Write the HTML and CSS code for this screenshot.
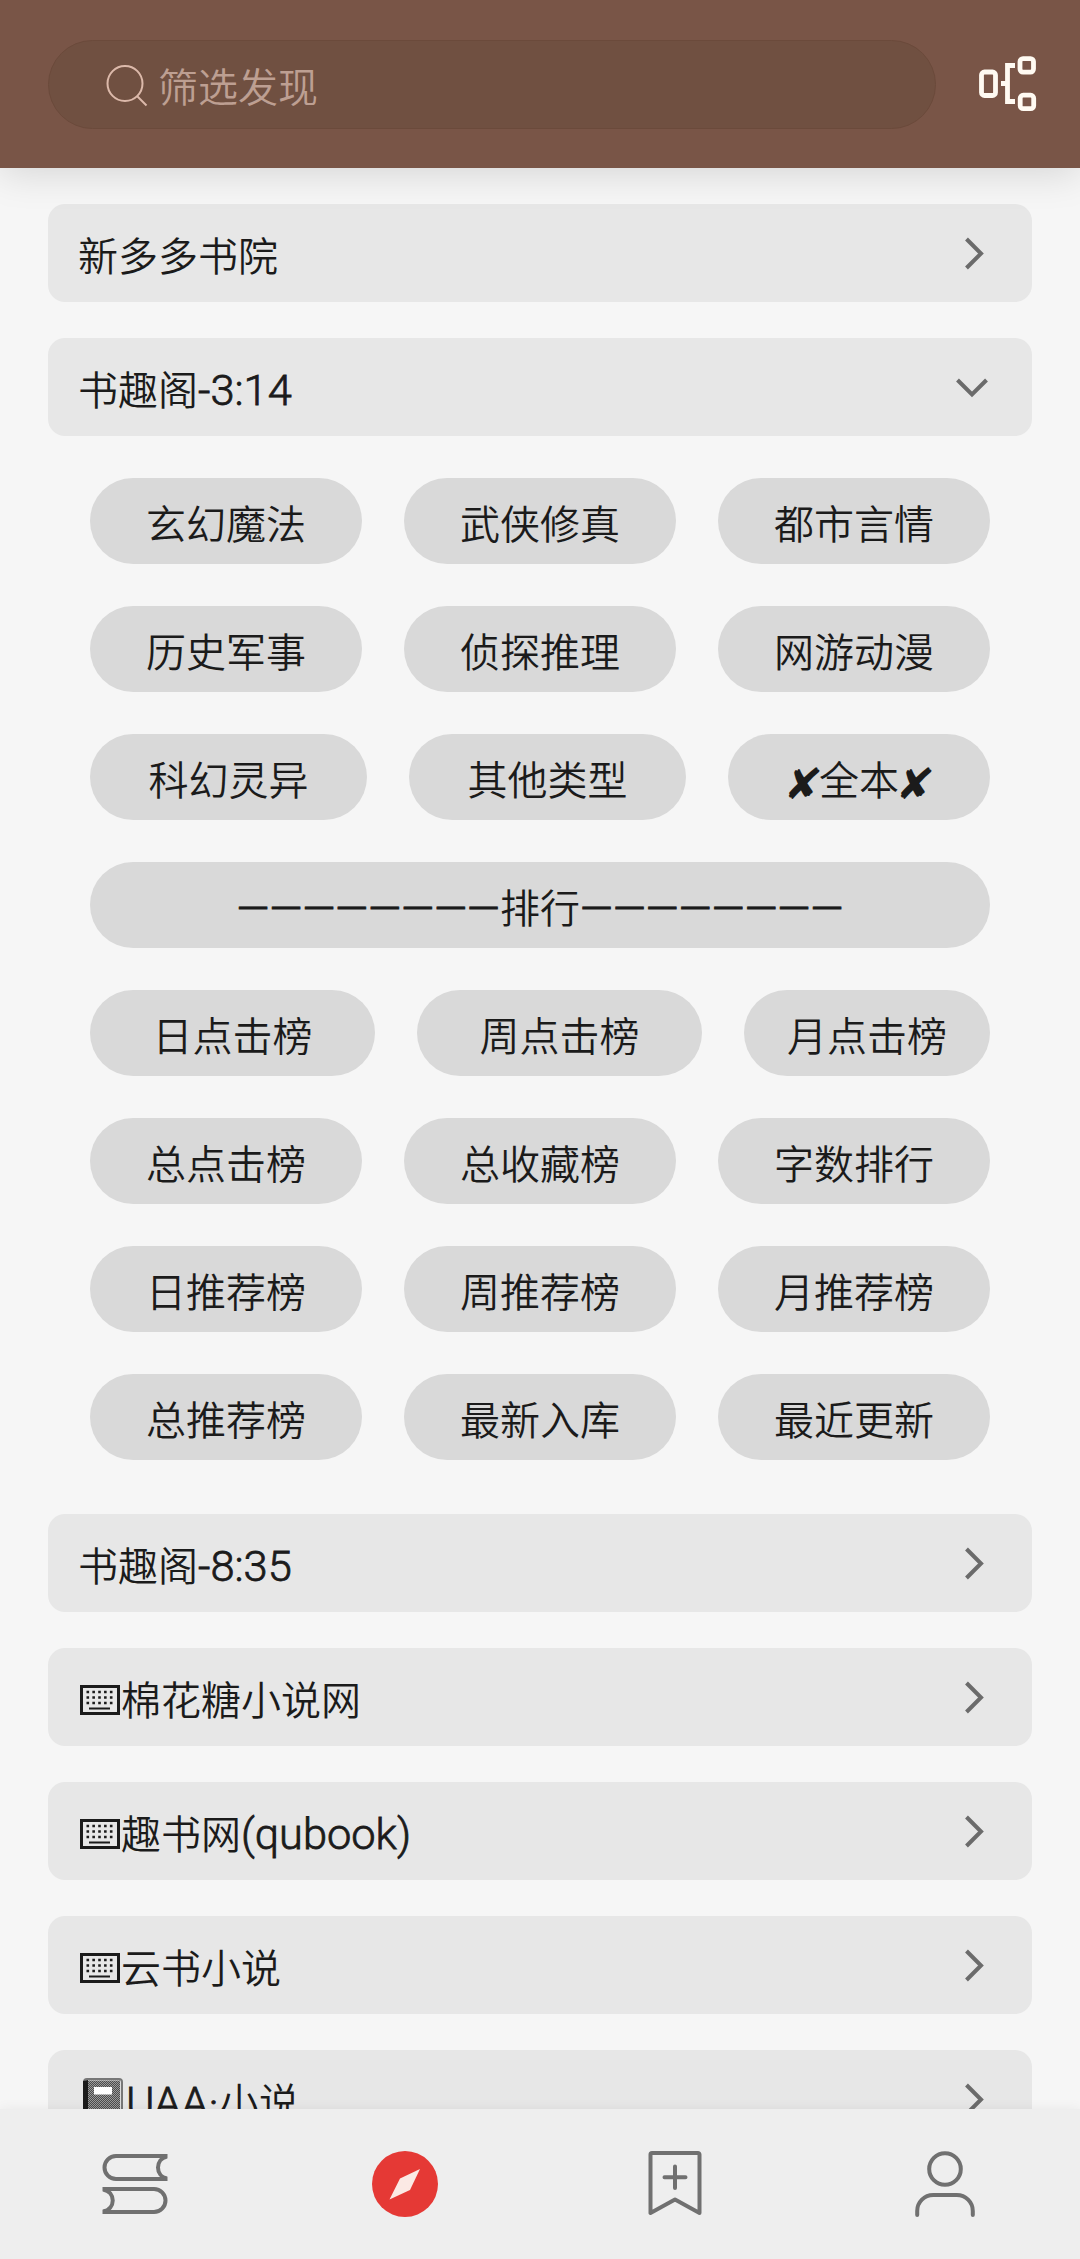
FILE: index.html
```html
<!DOCTYPE html>
<html lang="zh-CN">

<head>
  <meta charset="UTF-8" />
  <title>发现</title>
  <link rel="stylesheet" href="styles.css">
</head>

<body>
  <!-- 公用图标 -->
  <svg class="defs">
    <symbol id="right" viewBox="0 0 36 36">
      <path d="M12.500 4L27 18.500 12.500 33" />
    </symbol>
    <symbol id="down" viewBox="0 0 36 36">
      <path d="M3.500 11L18 25.500 32.500 11" />
    </symbol>
    <symbol id="keyboard" viewBox="0 0 40 30">
      <rect x="1.500" y="1.500" width="37" height="27" fill="none" stroke="#1b1b1b" stroke-width="3" />
      <path d="M6.500 7h28M6.500 12.500h28M6.500 18h28" stroke="#1b1b1b" stroke-width="2.600" stroke-dasharray="2.600 3.250" />
      <path d="M9 23.500h21" stroke="#1b1b1b" stroke-width="2" />
    </symbol>
  </svg>

  <!-- 顶部搜索 -->
  <header class="header">
    <div class="search">
      <svg class="search-icon" viewBox="0 0 42 44">
        <circle cx="19" cy="20.500" r="17.500" />
        <path d="M31 33L40.500 42.500" />
      </svg>
      <span>筛选发现</span>
    </div>
    <svg class="group-icon" viewBox="0 0 58 56">
      <rect x="2.500" y="16" width="14" height="23.500" rx="3" />
      <rect x="41" y="2.600" width="13.500" height="13.500" rx="3" />
      <rect x="41.200" y="39.200" width="13.500" height="13.500" rx="3" />
      <path d="M22 27.500h6M36 9.500h-7.500v36h7.500" />
    </svg>
  </header>

  <!-- 书源列表 -->
  <main class="list">
    <div class="row"><span>新多多书院</span><svg class="arrow"><use href="#right" /></svg></div>
    <div class="row"><span>书趣阁<i>-3:14</i></span><svg class="arrow"><use href="#down" /></svg></div>
    <div class="tags">
      <div class="line"><a>玄幻魔法</a><a>武侠修真</a><a>都市言情</a></div>
      <div class="line"><a>历史军事</a><a>侦探推理</a><a>网游动漫</a></div>
      <div class="line type"><a>科幻灵异</a><a>其他类型</a><a><b>✘</b>全本<b>✘</b></a></div>
      <div class="line rank"><a><i>————————</i>排行<i>————————</i></a></div>
      <div class="line click"><a>日点击榜</a><a>周点击榜</a><a>月点击榜</a></div>
      <div class="line"><a>总点击榜</a><a>总收藏榜</a><a>字数排行</a></div>
      <div class="line"><a>日推荐榜</a><a>周推荐榜</a><a>月推荐榜</a></div>
      <div class="line"><a>总推荐榜</a><a>最新入库</a><a>最近更新</a></div>
    </div>
    <div class="row"><span>书趣阁<i>-8:35</i></span><svg class="arrow"><use href="#right" /></svg></div>
    <div class="row"><svg class="keyboard"><use href="#keyboard" /></svg><span>棉花糖小说网</span><svg class="arrow"><use href="#right" /></svg></div>
    <div class="row"><svg class="keyboard"><use href="#keyboard" /></svg><span>趣书网<i>(qubook)</i></span><svg class="arrow"><use href="#right" /></svg></div>
    <div class="row"><svg class="keyboard"><use href="#keyboard" /></svg><span>云书小说</span><svg class="arrow"><use href="#right" /></svg></div>
    <div class="row">
      <svg class="notebook" viewBox="0 0 40 44">
        <defs>
          <pattern id="dots" width="2" height="2" patternUnits="userSpaceOnUse">
            <rect width="2" height="2" fill="#9a9a9a" />
            <rect width="1" height="1" fill="#4c4c4c" />
            <rect x="1" y="1" width="1" height="1" fill="#4c4c4c" />
          </pattern>
        </defs>
        <rect x="1" y="1" width="38" height="42" rx="3" fill="#ddd" stroke="#777" stroke-width="2" />
        <rect x="3" y="2.500" width="34" height="40" fill="url(#dots)" />
        <path d="M0 3l5-1v42H0z" fill="#1b1b1b" />
        <rect x="11" y="9" width="18" height="7.500" fill="#fff" />
      </svg>
      <span><i>UAA·</i>小说</span><svg class="arrow"><use href="#right" /></svg>
    </div>
  </main>

  <!-- 底部导航 -->
  <nav class="nav">
    <a><svg viewBox="0 0 66 66">
      <path d="M65.500 5H14a11.500 11.500 0 0 0 0 23h51.500M65 5.500C53 8 53 25 65 27.500" />
      <path d="M.500 38h51.500a11.500 11.500 0 0 1 0 23H.500M1 38.500C14 41 14 58 1 60.500" />
    </svg></a>
    <a><svg viewBox="0 0 66 66">
      <circle class="on" cx="33" cy="33" r="33" />
      <path class="needle" d="M48 18L38 39 17.500 48.500 28 27.500z" />
    </svg></a>
    <a><svg viewBox="0 0 66 66">
      <path d="M10 2h46a1.500 1.500 0 0 1 1.500 1.500V62L33 48.500 8.500 62V3.500A1.500 1.500 0 0 1 10 2z" />
      <path class="plus" d="M33 15.500v21.500M22.500 26.300h21" />
    </svg></a>
    <a><svg viewBox="0 0 66 66">
      <circle cx="33" cy="18" r="15.800" />
      <path class="plus" d="M5.200 64v-4a16 16 0 0 1 16-16h23.600a16 16 0 0 1 16 16v4" />
    </svg></a>
  </nav>
</body>

</html>
```
FILE: styles.css
```css
* {
  padding: 0;
  margin: 0;
  box-sizing: border-box;
}

body {
  display: flex;
  flex-direction: column;
  height: 2259px;
  overflow: hidden;
  background: #f6f6f6;
  color: #1b1b1b;
  font-family: "Noto Sans CJK SC", sans-serif;
  font-size: 40px;
  font-weight: 350;
}

i {
  font-family: Roboto, sans-serif;
  font-size: 43.400px;
  font-style: normal;
  font-weight: 300;
  line-height: 0;
  -webkit-text-stroke: .8px #1b1b1b;
}

.defs {
  display: none;
}

.header {
  display: flex;
  align-items: center;
  flex: none;
  height: 168px;
  padding: 0 43px 0 48px;
  background: #795547;
  box-shadow: 0 6px 36px rgba(0, 0, 0, .13);
  position: relative;
  z-index: 1;
}

.search {
  display: flex;
  align-items: center;
  width: 888px;
  height: 89px;
  padding: 2px 0 0 57px;
  border: 1px solid #6b4a3b;
  border-radius: 45px;
  background: #705041;
  color: #bd9f92;
}

.search-icon {
  width: 42px;
  height: 44px;
  margin-right: 10px;
  fill: none;
  stroke: #dcb9aa;
  stroke-width: 2;
}

.group-icon {
  width: 58px;
  height: 56px;
  margin-left: auto;
  fill: none;
  stroke: #fffaf2;
  stroke-width: 4.800;
}

.list {
  flex: 1;
  min-height: 0;
  padding: 36px 48px 0;
  overflow: hidden;
}

.row {
  display: flex;
  align-items: center;
  height: 98px;
  margin-bottom: 36px;
  padding: 0 42px 0 30px;
  border-radius: 17px;
  background: #e7e7e7;
}

.row span {
  line-height: 60px;
  padding-top: 1px;
}

.arrow {
  width: 36px;
  height: 36px;
  margin-left: auto;
  fill: none;
  stroke: #6b6b6b;
  stroke-width: 4;
}

.keyboard {
  width: 40px;
  height: 30px;
  margin: 6px 1px 0 2px;
}

.notebook {
  width: 40px;
  height: 44px;
  margin: 2px 3px 0 5px;
}

.tags {
  padding: 6px 42px 12px;
}

.line {
  display: flex;
  gap: 42px;
  margin-bottom: 42px;
}

.line:last-child {
  margin-bottom: 0;
}

.tags + .row {
  margin-top: 42px;
}

.line a {
  flex: 1;
  height: 86px;
  padding-top: 1px;
  border-radius: 43px;
  background: #d9d9d9;
  line-height: 86px;
  text-align: center;
  white-space: nowrap;
}

.line b {
  display: inline-block;
  margin: 0 -2px;
  font-family: "DejaVu Sans", sans-serif;
  font-size: 43px;
  font-weight: 400;
  line-height: 0;
  transform: translateY(4px) skewX(-8deg);
}

.rank i {
  font-size: 42.700px;
}

.type a:last-child {
  flex: 0 0 262px;
}

.click a:last-child {
  flex: 0 0 246px;
}

.nav {
  display: flex;
  flex: none;
  height: 150px;
  background: #eee;
  box-shadow: 0 0 12px rgba(0, 0, 0, .06);
  position: relative;
}

.nav a {
  display: flex;
  flex: 1;
  align-items: center;
  justify-content: center;
}

.nav svg {
  width: 66px;
  height: 66px;
  fill: none;
  stroke: #707070;
  stroke-width: 4;
  stroke-linejoin: round;
}

.nav .on {
  fill: #e53935;
  stroke: none;
}

.nav .needle {
  fill: #fbe9e4;
  stroke: none;
}

.nav .plus {
  stroke-linecap: round;
}
```
